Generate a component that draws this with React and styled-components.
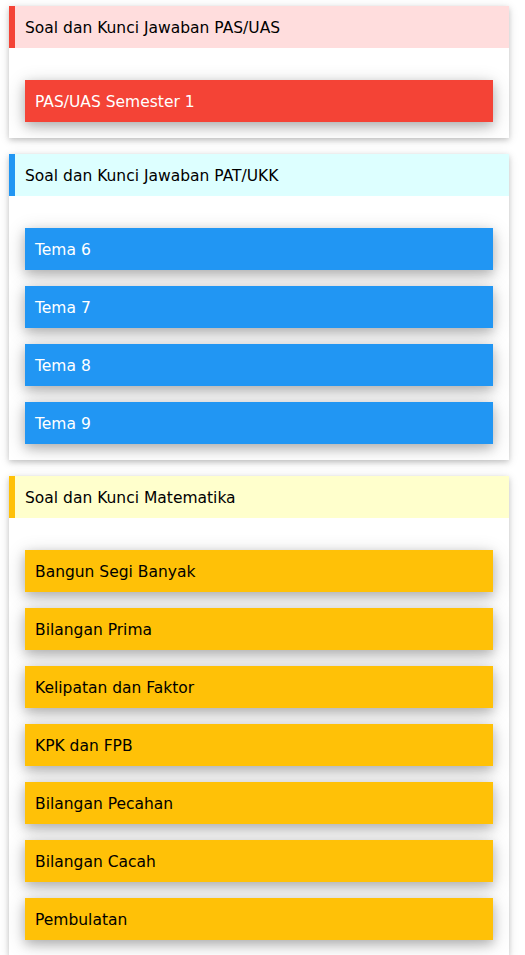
import React from "react";
import styled, { createGlobalStyle } from "styled-components";

const Global = createGlobalStyle`
  html, body { margin: 0; padding: 0; background: #fff; }
  body { font-family: "DejaVu Sans", Verdana, sans-serif; font-size: 15.5px; color: #000; }
`;

const Page = styled.div`
  display: flex;
  flex-direction: column;
  gap: 16px;
  padding: 6px 16px 16px 9px;
  width: 500px;
`;

const Card = styled.section`
  background: #fff;
  box-shadow: 0 2px 5px 0 rgba(0,0,0,0.16), 0 2px 10px 0 rgba(0,0,0,0.12);
  display: flex;
  flex-direction: column;
  padding-bottom: 16px;
`;

const Header = styled.div`
  height: 42px;
  box-sizing: border-box;
  padding-top: 2px;
  display: flex;
  align-items: center;
  border-left: 6px solid ${p => p.$accent};
  background: ${p => p.$tint};
  padding-left: 10px;
  color: #000;
  margin-bottom: 32px;
`;

const List = styled.div`
  display: flex;
  flex-direction: column;
  gap: 16px;
  padding: 0 16px;
`;

const Item = styled.a`
  display: flex;
  align-items: center;
  box-sizing: border-box;
  height: 42px;
  padding-top: 2px;
  padding-left: 10px;
  background: ${p => p.$bg};
  color: ${p => p.$fg};
  text-decoration: none;
  box-shadow: 0 4px 10px 0 rgba(0,0,0,0.2), 0 4px 20px 0 rgba(0,0,0,0.19);
`;

const sections = [
  {
    title: "Soal dan Kunci Jawaban PAS/UAS",
    accent: "#f44336", tint: "#ffdddd", bg: "#f44336", fg: "#fff",
    items: ["PAS/UAS Semester 1"],
  },
  {
    title: "Soal dan Kunci Jawaban PAT/UKK",
    accent: "#2196F3", tint: "#ddffff", bg: "#2196F3", fg: "#fff",
    items: ["Tema 6", "Tema 7", "Tema 8", "Tema 9"],
  },
  {
    title: "Soal dan Kunci Matematika",
    accent: "#ffc107", tint: "#ffffcc", bg: "#ffc107", fg: "#000",
    items: ["Bangun Segi Banyak", "Bilangan Prima", "Kelipatan dan Faktor", "KPK dan FPB", "Bilangan Pecahan", "Bilangan Cacah", "Pembulatan"],
  },
];

export default function App() {
  return (
    <>
      <Global />
      <Page>
        {sections.map(s => (
          <Card key={s.title}>
            <Header $accent={s.accent} $tint={s.tint}>{s.title}</Header>
            <List>
              {s.items.map(it => (
                <Item key={it} href="#" $bg={s.bg} $fg={s.fg}>{it}</Item>
              ))}
            </List>
          </Card>
        ))}
      </Page>
    </>
  );
}
